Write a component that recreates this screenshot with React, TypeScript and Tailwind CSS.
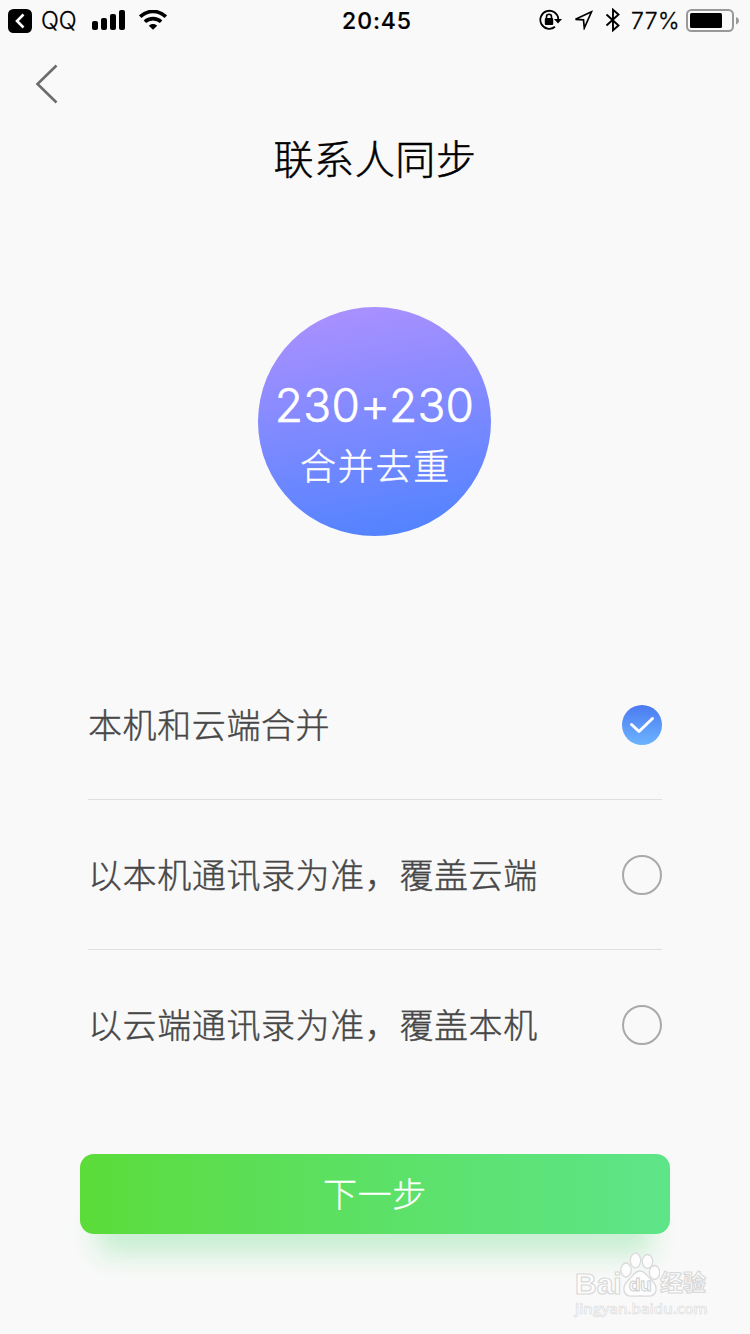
import React, { useState } from 'react'

interface OptionProps {
  label: string
  checked: boolean
  onSelect: () => void
}

const options = [
  '本机和云端合并',
  '以本机通讯录为准，覆盖云端',
  '以云端通讯录为准，覆盖本机',
]

const StatusBar = () => (
  <div className="flex h-10 items-center justify-between pl-2 pr-[11px] font-['Inter','Liberation_Sans',sans-serif] text-black">
    <div className="flex w-[240px] items-center pt-0.5">
      <svg className="h-6 w-6 shrink-0" viewBox="0 0 24 24" fill="none">
        <rect width="24" height="24" rx="5.500" fill="#000" />
        <path d="M15.500 5.500 9 12l6.500 6.500" stroke="#fff" strokeWidth="2.600" />
      </svg>
      <span className="ml-[9px] w-[51px] shrink-0 text-[23.500px] font-light leading-9 [-webkit-text-stroke:0.300px_#000]">
        QQ
      </span>
      <svg className="-mt-0.5 h-5 w-[33px] shrink-0" viewBox="0 0 33 20">
        <rect x="0" y="11" width="6" height="9" rx="2" />
        <rect x="9" y="8" width="6" height="12" rx="2" />
        <rect x="18" y="4" width="6" height="16" rx="2" />
        <rect x="27" y="0" width="6" height="20" rx="2" />
      </svg>
      <svg className="-mt-0.5 ml-[14px] h-5 w-7 shrink-0" viewBox="0 0 28 20" fill="none" stroke="#000">
        <path d="M1.200 6.700C8.500-.4 19.500-.4 26.800 6.700" strokeWidth="3.600" />
        <path d="M5.900 11.800c4.500-4.200 11.700-4.200 16.200 0" strokeWidth="3.600" />
        <path d="M14 19.700 9.800 15.700c2.300-2.200 6.100-2.200 8.400 0z" fill="#000" stroke="none" />
      </svg>
    </div>
    <span className="ml-[7px] pt-px text-[23px] font-medium leading-9 tracking-[0.900px] [-webkit-text-stroke:0.200px_#000]">
      20:45
    </span>
    <div className="flex w-[240px] items-center justify-end">
      <svg className="h-[22px] w-6 shrink-0" viewBox="0 0 24 22" fill="none">
        <path d="M17 17.800A9 9 0 1 1 20.300 10" stroke="#000" strokeWidth="1.800" />
        <path d="M16 10h8l-4 4.400z" fill="#000" />
        <rect x="6.800" y="9" width="8.400" height="7" rx="1" fill="#000" />
        <path d="M8.500 9.500V7.800a2.500 2.500 0 0 1 5 0v1.700" stroke="#000" strokeWidth="1.600" />
      </svg>
      <svg className="ml-[11px] h-5 w-5 shrink-0" viewBox="0 0 20 20" fill="none">
        <path d="M18.500 1.800 2.500 9.300l8 .5.800 8.200z" stroke="#000" strokeWidth="1.700" />
      </svg>
      <svg className="ml-3 h-6 w-4 shrink-0" viewBox="0 0 16 24" fill="none">
        <path d="m1.500 6.500 12 11L8 22.300V1.700l5.500 4.800-12 11" stroke="#000" strokeWidth="1.900" />
      </svg>
      <span className="ml-[10px] w-[55px] shrink-0 whitespace-nowrap pt-px text-[23px] font-light leading-9 tracking-[0.400px] [-webkit-text-stroke:0.300px_#000]">
        77%
      </span>
      <svg className="h-[23px] w-[53px] shrink-0" viewBox="0 0 53 23">
        <rect x="1" y="1" width="46" height="21" rx="4.500" fill="none" stroke="#999" strokeWidth="2" />
        <rect x="4" y="4" width="32" height="15" rx="1.500" />
        <path d="M50 8c4 1.500 4 6 0 7.500z" fill="#999" />
      </svg>
    </div>
  </div>
)

const Option = ({ label, checked, onSelect }: OptionProps) => (
  <button
    className="flex h-[150px] w-full cursor-pointer items-center justify-between border-b border-[#dfdfdf] text-left last:border-transparent"
    onClick={onSelect}
  >
    <span className="pt-px text-[34px] font-light tracking-[0.600px] text-[#474747] [-webkit-text-stroke:0.400px_#474747]">
      {label}
    </span>
    {checked ? (
      <span className="flex h-10 w-10 items-center justify-center rounded-full bg-linear-to-b from-[#4c79f0] to-[#6db4ff]">
        <svg className="h-10 w-10" viewBox="0 0 40 40" fill="none">
          <path
            d="m9.500 19.500 7.500 7L30.500 13.500"
            stroke="#fff"
            strokeWidth="3"
            strokeLinecap="round"
            strokeLinejoin="round"
          />
        </svg>
      </span>
    ) : (
      <span className="h-10 w-10 rounded-full border-2 border-[#a9a9a9]" />
    )}
  </button>
)

const Watermark = () => (
  <div className="pointer-events-none absolute left-[575px] top-[1252px] w-[138px]">
    <div className="flex h-[46px] items-end font-['Inter','Noto_Sans_CJK_SC',sans-serif] font-bold text-[#fdfdfd]">
      <span className="mb-1 w-[45px] shrink-0 font-['Liberation_Sans',sans-serif] text-[30px] leading-[20px] [-webkit-text-stroke:1.200px_#d9d9d9]">
        Bai
      </span>
      <svg className="h-[46px] w-[40px] shrink-0" viewBox="0 0 40 46" fill="#fdfdfd" stroke="#dadada" strokeWidth="1.300">
        <ellipse cx="6" cy="18" rx="5.200" ry="7" />
        <ellipse cx="15.500" cy="8.500" rx="5.200" ry="7.300" />
        <ellipse cx="27.500" cy="9.500" rx="5.200" ry="7" />
        <ellipse cx="34.500" cy="20.500" rx="5.200" ry="7" />
        <path d="M20 19c-5 0-7 4.500-10 7.500-4 4-7 7-6 12 1.500 7.500 10 5.500 16 5.500s14.500 2 16-5.500c1-5-2-8-6-12-3-3-5-7.500-10-7.500z" />
        <text x="9" y="39" fontSize="18" stroke="#cfcfcf" strokeWidth="1">
          du
        </text>
      </svg>
      <span className="h-[29px] whitespace-nowrap text-[23px] leading-[29px] [-webkit-text-stroke:1.200px_#d9d9d9]">
        经验
      </span>
    </div>
    <div className="mt-0.5 font-['Open_Sans',sans-serif] text-[15px] font-semibold leading-[16px] text-[#fcfcfc] [-webkit-text-stroke:0.700px_#dedede]">
      jingyan.baidu.com
    </div>
  </div>
)

const App = () => {
  const [selected, setSelected] = useState(0)

  return (
    <div className="relative flex h-[1334px] w-[750px] flex-col overflow-hidden bg-[#f9f9f9] font-['Inter','Noto_Sans_CJK_SC',sans-serif]">
      <StatusBar />
      <div className="flex h-[88px] items-center pl-[35px]">
        <button className="cursor-pointer">
          <svg className="h-10 w-6" viewBox="0 0 24 40" fill="none">
            <path d="M21.500 1.500 2.500 20l19 18.500" stroke="#6c6c6c" strokeWidth="2.600" />
          </svg>
        </button>
      </div>
      <h1 className="h-[60px] text-center text-[40px] font-light leading-[64px] tracking-[0.600px] text-black [-webkit-text-stroke:0.500px_#000]">
        联系人同步
      </h1>
      <div className="ml-[258px] mt-[119px] flex h-[229px] w-[233px] flex-col items-center rounded-[50%] bg-linear-[170deg] from-[#b091ff] to-[#4c82ff] pt-[70px] text-white">
        <span className="text-[46px] font-light leading-[56px] tracking-[0.300px] [-webkit-text-stroke:0.600px_#fff]">
          230+230
        </span>
        <span className="mt-[6px] pl-[2px] text-[36px] font-light leading-[56px] tracking-[1.800px] [-webkit-text-stroke:0.400px_#fff]">
          合并去重
        </span>
      </div>
      <div className="mx-[88px] mt-[114px]">
        {options.map((label, index) => (
          <Option
            key={index}
            label={label}
            checked={selected === index}
            onSelect={() => setSelected(index)}
          />
        ))}
      </div>
      <button className="mx-20 mt-[54px] h-20 cursor-pointer rounded-[14px] bg-linear-to-r from-[#5bdc38] to-[#5ee588] text-[34px] font-light tracking-[0.600px] text-white shadow-[0_38px_28px_-18px_#c5eecf] [-webkit-text-stroke:0.300px_#fff]">
        下一步
      </button>
      <Watermark />
    </div>
  )
}

export default App
